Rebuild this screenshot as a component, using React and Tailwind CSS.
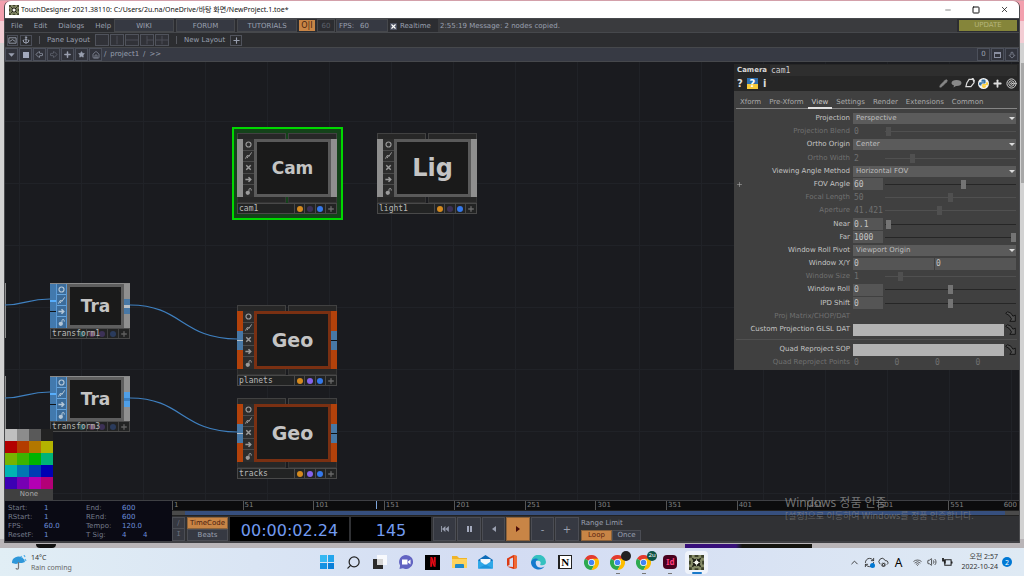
import React from "react";
import { SiNetflix } from "react-icons/si";
import {
    Anchor,
    ArrowBigDown,
    ArrowBigLeft,
    ArrowBigRight,
    ChevronUp,
    CloudCog,
    House,
    Minus,
    Pencil,
    Plus,
    RefreshCw,
    Search,
    Square,
    Star,
    Target,
    Volume2,
    Wifi,
    X
} from "lucide-react";

const PALETTE = [
    "bg-[#bfbfbf]", "bg-[#8c8c8c]", "bg-[#595959]", "bg-[#222222]",
    "bg-[#b30000]", "bg-[#b33c00]", "bg-[#b37700]", "bg-[#b3b300]",
    "bg-[#77b300]", "bg-[#3cb300]", "bg-[#00b300]", "bg-[#00b377]",
    "bg-[#00b3b3]", "bg-[#0077b3]", "bg-[#003cb3]", "bg-[#0000b3]",
    "bg-[#3c00b3]", "bg-[#7700b3]", "bg-[#b300b3]", "bg-[#b30077]"
];

const PARAMETERS = [
    { label: "Projection", type: "menu", value: "Perspective" },
    { label: "Projection Blend", type: "slider", value: "0", position: 1, disabled: true },
    { label: "Ortho Origin", type: "menu", value: "Center" },
    { label: "Ortho Width", type: "slider", value: "2", position: 20, disabled: true },
    { label: "Viewing Angle Method", type: "menu", value: "Horizontal FOV" },
    { label: "FOV Angle", type: "slider", value: "60", position: 60, expand: true },
    { label: "Focal Length", type: "slider", value: "50", position: 50, disabled: true },
    { label: "Aperture", type: "slider", value: "41.421", position: 41, disabled: true },
    { label: "Near", type: "slider", value: "0.1", position: 1 },
    { label: "Far", type: "slider", value: "1000", position: 100 },
    { label: "Window Roll Pivot", type: "menu", value: "Viewport Origin" },
    { label: "Window X/Y", type: "pair", value: "0" },
    { label: "Window Size", type: "slider", value: "1", position: 10, disabled: true },
    { label: "Window Roll", type: "slider", value: "0", position: 50 },
    { label: "IPD Shift", type: "slider", value: "0", position: 50 },
    { label: "Proj Matrix/CHOP/DAT", type: "path", disabled: true },
    { label: "Custom Projection GLSL DAT", type: "path" }
];

const FLAGS = {
    viewer: <circle cx="5" cy="5" r="2.800" strokeWidth="1.300" />,
    bypass: <path d="M1.500 8.500 4 4.500 5.500 6 8.500 1.500M3.500 8 5 5" />,
    cook: <path d="M2.500 2.500l5 5M7.500 2.500l-5 5" strokeWidth="1.600" />,
    exportFlag: <path d="M1.500 5h6M5 2.500 7.500 5 5 7.500" strokeWidth="1.700" />,
    lock: (
        <g>
            <circle cx="4.200" cy="6.500" r="2.400" fill="currentColor" stroke="none" />
            <path d="M5.500 5V3a1.300 1.300 0 0 1 2.600 0v1" />
        </g>
    )
};

function FlagIcon({ name }) {
    return (
        <svg viewBox="0 0 10 10" className="size-[9px]" fill="none" stroke="currentColor" strokeWidth="1.1">
            {FLAGS[name]}
        </svg>
    );
}

function DropArrow({ className }) {
    return (
        <svg viewBox="0 0 16 16" className={className} fill="currentColor" stroke="#151515" strokeWidth="1.4">
            <path d="M1 3.500 3.500 1Q9.500 2 11.500 7.500L15 6v9H7l2.500-3.500Q7 5.500 1 3.500z" />
        </svg>
    );
}

function ChromeLogo() {
    return (
        <svg viewBox="0 0 24 24" className="size-[15px]">
            <path d="M12 12 1.6 6A12 12 0 0 1 22.4 6z" fill="#e33b2e" />
            <path d="M12 12 1.6 6A12 12 0 0 0 12 24l5-9z" fill="#2da94f" />
            <path d="M12 12l5 3-5 9A12 12 0 0 0 22.4 6H12z" fill="#fdbd00" />
            <circle cx="12" cy="12" r="5.6" fill="#fff" />
            <circle cx="12" cy="12" r="4.4" fill="#4285f4" />
        </svg>
    );
}

function TouchLogo({ className }) {
    return (
        <svg viewBox="0 0 16 16" className={className}>
            <rect width="16" height="16" fill="#858b66" />
            <path d="M0 0h3v3H0zM13 0h3v3h-3zM0 13h3v3H0zM13 13h3v3h-3zM6 0h4v2H6zM6 14h4v2H6zM0 6h2v4H0zM14 6h2v4h-2z" fill="#3c402a" />
            <path d="M3.500 3.500l9 9M12.500 3.500l-9 9" stroke="#23251a" strokeWidth="1.600" />
            <circle cx="8" cy="8" r="4" fill="#1b1c14" />
            <path d="M8 4.500v7M4.500 8h7" stroke="#c8ccb4" strokeWidth="1" />
            <circle cx="8" cy="8" r="2.200" fill="#f5f5ee" />
        </svg>
    );
}

function PythonLogo() {
    return (
        <svg viewBox="0 0 16 16" className="size-[11px]">
            <circle cx="8" cy="8" r="8" fill="#f4f4f4" />
            <path d="M8 2c-2 0-3 .6-3 2v1.500h3.500V6H3.500C2 6 1.500 7 1.500 8.500S2.200 11 3.500 11H5V9.500C5 8.400 5.800 8 7 8h2.500c1 0 1.500-.6 1.500-1.500V4c0-1.400-1-2-3-2z" fill="#3572a5" />
            <path d="M8.500 14.500c2 0 3-.6 3-2V11H8v-.5h5c1.200 0 1.700-1 1.700-2.300S14 5.700 12.800 5.700H12V7c0 1.200-.8 1.800-2 1.800H7.500c-1 0-1.500.6-1.500 1.500v2.200c0 1.400 1 2 2.500 2z" fill="#ffd140" />
        </svg>
    );
}

/**
 * Operator tile that carries child networks: flaps on top and bottom, flags on the left
 */
function ComponentNode({ title, name, className, side, frame, titleSize, dot, connected }) {
    return (
        <div className={`absolute flex w-[100px] flex-col ${className}`}>
            <div className="grid h-[6px] grid-cols-2 gap-[2px]">
                <span className="border border-b-0 border-[#414141] bg-[#272727]"></span>
                <span className="border border-b-0 border-[#414141] bg-[#272727]"></span>
            </div>
            <div className="flex h-[58px]">
                <div className={`flex w-[6px] flex-col justify-center ${side}`}>
                    {connected && <span className="h-[19px] border-y-[9px] border-[#4878a5] bg-[#b9c0c6]"></span>}
                </div>
                <div className="grid w-[11px] grid-rows-5 divide-y divide-[#4a4a4a] bg-[#2c2c2c] text-[#9a9a9a]">
                    {["viewer", "bypass", "cook", "exportFlag", "lock"].map((flag) => (
                        <button key={flag} aria-label={flag} className="flex items-center justify-center">
                            <FlagIcon name={flag} />
                        </button>
                    ))}
                </div>
                <div className={`flex flex-1 items-center justify-center border-[3px] bg-[#1a1a1a] font-bold text-[#c4c4c4] ${frame} ${titleSize}`}>
                    {title}
                </div>
                <div className={`flex w-[6px] flex-col justify-center ${side}`}>
                    {connected && <span className="h-[19px] border-y-[9px] border-[#4878a5] bg-[#0e1114]"></span>}
                </div>
            </div>
            <div className="grid h-[6px] grid-cols-2 gap-[2px]">
                <span className="border border-t-0 border-[#353535] bg-[#272727]"></span>
                <span className="border border-t-0 border-[#353535] bg-[#272727]"></span>
            </div>
            <div className="flex h-[11px] border border-[#494949] bg-[#222323]">
                <span className="flex-1 pl-px font-['DejaVu_Sans_Mono',monospace] text-[8px] leading-[9px] text-[#b8b8b8]">{name}</span>
                <div className="grid w-[42px] grid-cols-4 divide-x divide-[#494949] border-l border-[#494949]">
                    <i className="flex items-center justify-center"><b className="size-[6px] rounded-full bg-[#d58a1e]"></b></i>
                    <i className="flex items-center justify-center"><b className={`size-[6px] rounded-full ${dot}`}></b></i>
                    <i className="flex items-center justify-center"><b className="size-[6px] rounded-full bg-[#3478ea]"></b></i>
                    <i className="flex items-center justify-center text-[#686868]"><Plus size={8} strokeWidth={4} /></i>
                </div>
            </div>
        </div>
    );
}

function TransformNode({ name, className, output }) {
    return (
        <div className={`absolute flex w-[80px] flex-col ${className}`}>
            <div className="flex h-[45px] border-t border-[#8a8a8a]">
                <div className="flex w-[6px] flex-col justify-center gap-[9px] bg-[#4279ad]">
                    <span className="h-[2px] bg-[#57aefc]"></span>
                    <span className="h-px bg-[#101418]"></span>
                </div>
                <div className="grid w-[11px] grid-rows-4 divide-y divide-[#66a5dd] border-x border-[#5a9ad6] bg-[#3c6c9a] text-[#b4c6d6]">
                    {["viewer", "bypass", "exportFlag", "lock"].map((flag) => (
                        <button key={flag} aria-label={flag} className="flex items-center justify-center">
                            <FlagIcon name={flag} />
                        </button>
                    ))}
                </div>
                <div className="flex flex-1 items-center justify-center border-[3px] border-[#5e5e5e] bg-[#1a1a1a] text-[17px] leading-5 font-bold text-[#c4c4c4]">
                    Tra
                </div>
                <div className="flex w-[6px] flex-col justify-center bg-[#8f8f8f]">
                    <span className={`h-[15px] border-y-[6px] ${output}`}></span>
                </div>
            </div>
            <div className="grid h-[11px] grid-cols-[26px_1fr] border border-[#494949] bg-[#222323]">
                <span className="z-10 pl-px font-['DejaVu_Sans_Mono',monospace] text-[8px] leading-[9px] text-[#b8b8b8]">{name}</span>
                <div className="grid grid-cols-5 divide-x divide-[#404040]">
                    <i className="flex items-center justify-center"><b className="size-[6px] rounded-full bg-[#28565a]"></b></i>
                    <i className="flex items-center justify-center"><b className="size-[6px] rounded-full bg-[#5b3355]"></b></i>
                    <i className="flex items-center justify-center"><b className="size-[6px] rounded-full bg-[#3c3156]"></b></i>
                    <i className="flex items-center justify-center"><b className="size-[6px] rounded-full bg-[#2a3b5c]"></b></i>
                    <i className="flex items-center justify-center text-[#606060]"><Plus size={8} strokeWidth={4} /></i>
                </div>
            </div>
        </div>
    );
}

class App extends React.Component {
    getTitleBar() {
        let titleBar = (
            <header className="flex h-[17px] shrink-0 items-center rounded-t-md bg-white pr-[10px] pl-1 font-['Noto_Sans','Noto_Sans_CJK_KR',sans-serif] text-[#111]">
                <TouchLogo className="mr-[2px] size-[10px]" />
                <h1 className="flex-1 truncate">TouchDesigner 2021.38110: C:/Users/2u.na/OneDrive/바탕 화면/NewProject.1.toe*</h1>
                <div className="flex items-center gap-5">
                    <button aria-label="Minimize" className="text-[#888]"><Minus size={8} strokeWidth={3} /></button>
                    <button aria-label="Maximize"><Square size={8} strokeWidth={3} /></button>
                    <button aria-label="Close"><X size={9} strokeWidth={2} /></button>
                </div>
            </header>
        );

        return titleBar;
    }

    getMenuBar() {
        let menuBar = (
            <nav className="flex h-[15px] shrink-0 items-stretch border-y border-[#46484c] bg-[#2c2d31]">
                <div className="flex w-[109px] items-center gap-[11px] pt-px pl-[6px]">
                    <button>File</button>
                    <button>Edit</button>
                    <button>Dialogs</button>
                    <button>Help</button>
                </div>
                <div className="flex gap-[2px]">
                    <a href="#wiki" className="flex w-[60px] items-center justify-center border border-[#46484c] bg-[#363942] pt-px">WIKI</a>
                    <a href="#forum" className="flex w-[59px] items-center justify-center border border-[#46484c] bg-[#363942] pt-px">FORUM</a>
                    <a href="#tutorials" className="flex w-[60px] items-center justify-center border border-[#46484c] bg-[#363942] pt-px">TUTORIALS</a>
                </div>
                <button className="mx-[2px] my-px w-[16px] bg-[#c88546] text-[8px] text-[#4a2510]">O|I</button>
                <span className="flex w-[18px] items-center justify-center border border-[#46484c] pt-px text-[#5e626c]">60</span>
                <span className="ml-px flex w-[52px] items-center gap-[6px] border border-[#46484c] bg-[#363942] pt-px pl-[2px]"><span>FPS:</span><span>60</span></span>
                <label className="flex w-[50px] items-center gap-[3px] pt-px pl-[2px]">
                    <span className="grid size-[7px] place-items-center bg-[#4b5060] text-white">
                        <input type="checkbox" defaultChecked className="peer col-start-1 row-start-1 size-[7px] appearance-none" />
                        <X size={7} strokeWidth={4} className="pointer-events-none col-start-1 row-start-1" />
                    </span>
                    Realtime
                </label>
                <span className="flex flex-1 items-center bg-[#3a3b3e] pt-px pl-[2px]">2:55:19 Message: 2 nodes copied.</span>
                <button className="mx-[2px] my-px w-[58px] bg-[#85853a] text-[#b5b57c]">UPDATE</button>
            </nav>
        );

        return menuBar;
    }

    getPaneBar() {
        let paneBar = (
            <div className="flex h-[14px] shrink-0 items-center bg-[#2c2d30]">
                <button aria-label="Bookmark" className="ml-[2px] flex h-[11px] w-[11px] items-center justify-center border border-[#4b4e58]">
                    <svg viewBox="0 0 10 10" className="size-[9px]" fill="none" stroke="currentColor"><path d="M1 2h8v6H1zM2 6l3-2 3 2" /></svg>
                </button>
                <button aria-label="Anchor" className="ml-[2px] flex h-[11px] w-[12px] items-center justify-center border border-[#4b4e58]"><Anchor size={8} strokeWidth={3} /></button>
                <span className="mx-[7px] h-[8px] w-px bg-[#55575e]"></span>
                <span className="w-[48px]">Pane Layout</span>
                <div className="flex gap-px text-[#50535c]">
                    {["", "M7 0v10", "M0 5h14", "M7 0v10M7 5h7", "M7 0v10M0 5h14"].map((shape) => (
                        <button key={shape} aria-label="Layout" className="h-[12px] w-[14px] border border-[#50535c] bg-[#313238]">
                            <svg viewBox="0 0 14 10" className="h-full w-full" fill="none" stroke="currentColor"><path d={shape} /></svg>
                        </button>
                    ))}
                </div>
                <span className="mx-[7px] h-[8px] w-px bg-[#55575e]"></span>
                <span className="w-[46px]">New Layout</span>
                <button aria-label="Add layout" className="flex h-[11px] w-[12px] items-center justify-center border border-[#50535c]"><Plus size={9} strokeWidth={3} /></button>
            </div>
        );

        return paneBar;
    }

    getPathBar() {
        let buttons = [
            ["Pane type", <svg viewBox="0 0 10 10" className="size-[9px]" fill="currentColor"><path d="M1.500 3.500h7L5 7.500z" /></svg>],
            ["Stop", <span className="size-[6px] bg-[#a4aabd]"></span>],
            ["Back", <ArrowBigLeft size={9} />],
            ["Forward", <ArrowBigRight size={9} className="opacity-50" />],
            ["Add operator", <Plus size={9} strokeWidth={4} />],
            ["Favorites", <Star size={7} fill="currentColor" />],
            ["Home", <House size={8} />]
        ];

        let pathBar = (
            <div className="flex h-[15px] shrink-0 items-center border-y border-[#46484c] bg-[#373a44]">
                {buttons.map(([label, icon]) => (
                    <button key={label} aria-label={label} className="mr-px flex h-[13px] w-[13px] items-center justify-center border border-[#4c505b] bg-[#31333b]">{icon}</button>
                ))}
                <div className="flex flex-1 gap-1 pl-px">
                    <span>/</span>
                    <a href="#project1">project1</a>
                    <span>/</span>
                    <span>&gt;&gt;</span>
                </div>
                <div className="flex gap-px pr-px">
                    <button className="h-[13px] w-[13px] border border-[#4c505b] bg-[#31333b]">0</button>
                    <button aria-label="Maximize pane" className="flex h-[13px] w-[13px] items-center justify-center border border-[#4c505b] bg-[#31333b]"><span className="h-[6px] w-[7px] border border-t-2 border-[#8a8fa0]"></span></button>
                    <button aria-label="Collapse pane" className="flex h-[13px] w-[13px] items-center justify-center border border-[#4c505b] bg-[#31333b]"><ArrowBigDown size={8} /></button>
                </div>
            </div>
        );

        return pathBar;
    }

    getParameterControl(parameter) {
        let text = parameter.disabled ? "text-[#707070]" : "text-[#c4c4c4]";

        if (parameter.type === "menu") {
            return (
                <div className="grid h-[11px] flex-1 items-center bg-[#5b5b5b] text-[#bfbfbf]">
                    <select id={parameter.label} className="col-start-1 row-start-1 h-[11px] appearance-none pl-[3px] leading-[11px]">
                        <option>{parameter.value}</option>
                    </select>
                    <svg viewBox="0 0 6 3" className="pointer-events-none col-start-1 row-start-1 mr-px h-[3px] w-[6px] justify-self-end" fill="#ddd"><path d="M0 0h6L3 3z" /></svg>
                </div>
            );
        }

        if (parameter.type === "pair") {
            return (
                <div className={`grid flex-1 grid-cols-2 gap-px font-['DejaVu_Sans_Mono',monospace] text-[8px] ${text}`}>
                    <input id={parameter.label} defaultValue="0" className="h-[12px] w-full min-w-0 bg-[#555] pl-px" />
                    <input aria-label="Window Y" defaultValue="0" className="h-[12px] w-full min-w-0 bg-[#555] pl-px" />
                </div>
            );
        }

        if (parameter.type === "path") {
            return (
                <div className="flex flex-1 items-center">
                    <input
                        id={parameter.label}
                        disabled={parameter.disabled}
                        className="h-[12px] w-full min-w-0 flex-1 bg-[#b3b3b3] text-[#222] disabled:bg-transparent"
                    />
                    <DropArrow className="ml-px size-[11px] text-[#505050]" />
                </div>
            );
        }

        return (
            <div className="flex flex-1 items-center gap-[2px]">
                <input
                    id={parameter.label}
                    defaultValue={parameter.value}
                    disabled={parameter.disabled}
                    className={`h-[12px] w-[30px] bg-[#555] pl-px font-['DejaVu_Sans_Mono',monospace] text-[8px] disabled:bg-transparent ${text}`}
                />
                <input
                    type="range"
                    aria-label={parameter.label + " slider"}
                    defaultValue={parameter.position}
                    disabled={parameter.disabled}
                    className="h-[9px] min-w-0 flex-1 appearance-none bg-[linear-gradient(#262626,#262626)] bg-[length:100%_1px] bg-center bg-no-repeat disabled:bg-[linear-gradient(#505050,#505050)] [&::-webkit-slider-thumb]:h-[9px] [&::-webkit-slider-thumb]:w-[5px] [&::-webkit-slider-thumb]:appearance-none [&::-webkit-slider-thumb]:bg-[#747474] disabled:[&::-webkit-slider-thumb]:bg-[#505050]"
                />
            </div>
        );
    }

    getParameterRow(parameter) {
        return (
            <div key={parameter.label} className="flex h-[13px] items-center gap-[3px]">
                <span className="w-[10px] pl-[2px] text-[#aaa]">{parameter.expand && <Plus size={7} />}</span>
                <label htmlFor={parameter.label} className={parameter.disabled ? "w-[103px] text-right text-[#707070]" : "w-[103px] text-right text-[#c4c4c4]"}>
                    {parameter.label}
                </label>
                {this.getParameterControl(parameter)}
            </div>
        );
    }

    getParameterPanel() {
        let panel = (
            <aside className="absolute top-[2px] right-0 w-[285px] bg-[#404040] pb-px whitespace-nowrap text-[#aaa]">
                <div className="bg-[#262626] pt-px pr-[2px] pl-[3px] pb-px">
                    <div className="flex h-[11px] items-center">
                        <b className="w-[33px] text-[#d8d8d8]">Camera</b>
                        <input aria-label="Operator name" defaultValue="cam1" className="h-[11px] min-w-0 flex-1 bg-[#2e2e2e] pl-px font-['DejaVu_Sans_Mono',monospace] text-[8px] text-[#ccc]" />
                    </div>
                    <div className="flex h-[14px] items-center text-[#ddd]">
                        <button className="w-[10px] text-left text-[10px] font-bold">?</button>
                        <button className="h-[11px] w-[11px] bg-[linear-gradient(#2f6fae_50%,#f5c93a_50%)] text-[10px] leading-[11px] font-bold text-white">?</button>
                        <button className="ml-[5px] text-[10px] font-bold">i</button>
                        <div className="ml-auto flex items-center gap-[3px]">
                            <Pencil size={9} fill="currentColor" className="text-[#888]" />
                            <svg viewBox="0 0 11 9" className="h-[9px] w-[11px]" fill="#888"><path d="M5.500 1C8.500 1 10.500 2.300 10.500 4S8.500 7 5.500 7H5L2.500 8.500 3 6.600C1.500 6 .5 5.100.5 4 .5 2.300 2.500 1 5.500 1z" /></svg>
                            <svg viewBox="0 0 11 11" className="size-[10px]" fill="none" stroke="currentColor" strokeWidth="1.300"><path d="M4.500 1.500 9 1.500 10 5 6.500 9.500 1 9.500 2 5.500z" /><path d="M8 0l2.500 4" strokeWidth="2" /></svg>
                            <PythonLogo />
                            <Plus size={11} strokeWidth={4} />
                            <Target size={11} />
                        </div>
                    </div>
                </div>
                <div className="mx-[2px] mt-[6px] flex h-[12px] gap-2 border-b border-[#858585] pl-1">
                    <button>Xform</button>
                    <button>Pre-Xform</button>
                    <button className="-mx-1 -mb-px border-b-2 border-[#e2e2e2] px-1 text-[#ccc]">View</button>
                    <button>Settings</button>
                    <button>Render</button>
                    <button>Extensions</button>
                    <button>Common</button>
                </div>
                <div className="mt-[3px] flex h-[224px] flex-col justify-between pr-[3px]">
                    {PARAMETERS.map((parameter) => this.getParameterRow(parameter))}
                </div>
                <hr className="mx-[2px] my-[3px] border-[#505050]" />
                <div className="pr-[3px]">
                    {this.getParameterRow({ label: "Quad Reproject SOP", type: "path" })}
                    <div className="flex h-[13px] items-center gap-[3px] text-[#707070]">
                        <span className="w-[116px] text-right">Quad Reproject Points</span>
                        <div className="grid flex-1 grid-cols-4 pl-px font-['DejaVu_Sans_Mono',monospace] text-[8px]">
                            <span>0</span>
                            <span>0</span>
                            <span>0</span>
                            <span>0</span>
                        </div>
                    </div>
                </div>
            </aside>
        );

        return panel;
    }

    getNetwork() {
        let network = (
            <main className="relative flex-1 overflow-hidden bg-[#1a1b1f] bg-[linear-gradient(to_right,#202227_1px,transparent_1px),linear-gradient(to_bottom,#202227_1px,transparent_1px)] bg-[length:62px_62px] bg-[position:14px_59px]">
                <div className="absolute top-[221px] left-0 h-[55px] w-px bg-[#8f8f8f]"></div>
                <div className="absolute top-[314px] left-0 h-[55px] w-px bg-[#8f8f8f]"></div>

                <div className="absolute top-[65px] left-[227px] h-[93px] w-[111px] border-2 border-[#00d800] bg-[#14431a]"></div>
                <ComponentNode title="Cam" name="cam1" className="top-[71px] left-[232px]" side="bg-[#8f8f8f]" frame="border-[#5a5a5a]" titleSize="text-[17px]" dot="bg-[#3c3156]" />
                <ComponentNode title="Lig" name="light1" className="top-[71px] left-[372px]" side="bg-[#8f8f8f]" frame="border-[#5a5a5a]" titleSize="text-2xl" dot="bg-[#3c3156]" />
                <ComponentNode title="Geo" name="planets" className="top-[243px] left-[232px]" side="bg-[#b3420b]" frame="border-[#7a3012]" titleSize="text-[19px]" dot="bg-[#8463ea]" connected />
                <ComponentNode title="Geo" name="tracks" className="top-[336px] left-[232px]" side="bg-[#b3420b]" frame="border-[#7a3012]" titleSize="text-[19px]" dot="bg-[#8463ea]" connected />
                <TransformNode name="transform1" className="top-[221px] left-[45px]" output="border-[#4878a5] bg-[#b9c0c6]" />
                <TransformNode name="transform3" className="top-[314px] left-[45px]" output="border-[#4f9fe8] bg-[#3b7fc0]" />

                <svg className="pointer-events-none absolute top-0 left-0 h-full w-full" fill="none" stroke="#3f80c0" strokeWidth="1.2">
                    <path d="M0 243c20 0 22-6 45-6" />
                    <path d="M0 336c20 0 22-6 45-6" />
                    <path d="M125 243c52 0 52 34 107 34" />
                    <path d="M125 336c52 0 52 34 107 34" />
                </svg>

                <div className="absolute bottom-0 left-0 w-[48px] bg-[#404040] text-center text-[#aaa]">
                    <div className="grid grid-cols-4">
                        {PALETTE.map((color) => <button key={color} aria-label="Node color" className={`h-[12px] ${color}`}></button>)}
                    </div>
                    <button className="block h-[11px] w-full leading-[11px]">None</button>
                </div>

                {this.getParameterPanel()}
            </main>
        );

        return network;
    }

    getTimeline() {
        let frames = [1, 51, 101, 151, 201, 251, 301, 351, 401, 451, 501, 551];

        let timeline = (
            <footer className="flex h-[43px] shrink-0 border-t border-b-2 border-[#3f4044] bg-[#303134]">
                <dl className="grid w-[167px] shrink-0 grid-cols-[36px_42px_36px_21px_1fr] grid-rows-4 items-center bg-[#0a0a14] pt-[3px] pb-px pl-[3px] text-[#747a8a] [&>dd]:text-[#6c8fdc]">
                    <dt>Start:</dt><dd>1</dd><dt>End:</dt><dd className="col-span-2">600</dd>
                    <dt>RStart:</dt><dd>1</dd><dt>REnd:</dt><dd className="col-span-2">600</dd>
                    <dt>FPS:</dt><dd>60.0</dd><dt>Tempo:</dt><dd className="col-span-2">120.0</dd>
                    <dt>ResetF:</dt><dd>1</dd><dt>T Sig:</dt><dd>4</dd><dd>4</dd>
                </dl>
                <div className="flex min-w-0 flex-1 flex-col">
                    <div className="relative flex h-[9px] bg-[#0c0c0d] leading-[9px] text-[#808080]">
                        {frames.map((frame) => <span key={frame} className="flex-1 border-l border-[#555] pl-px">{frame}</span>)}
                        <span className="absolute right-[2px]">600</span>
                        <span className="absolute top-0 h-[8px] w-px bg-[#7fa7dd]" style={{ left: (144 / 599) * 100 + "%" }}></span>
                    </div>
                    <div className="flex h-[6px] justify-between border-y border-[#222] bg-[#364f7e]">
                        <span className="w-[13px] bg-[#4a4a4a]"></span>
                        <span className="w-[14px] bg-[#4a4a4a]"></span>
                    </div>
                    <div className="flex flex-1 gap-[2px] pt-px">
                        <div className="grid w-[13px] grid-rows-2 text-[#6b7080]">
                            <button className="border border-[#4b4d54] bg-[#363840]">/</button>
                            <button className="border border-t-0 border-[#4b4d54] bg-[#363840] font-['DejaVu_Sans_Mono',monospace]">I</button>
                        </div>
                        <div className="grid w-[41px] grid-rows-2">
                            <button className="border border-[#8c623a] bg-[#c88546] text-[#4a1c10]">TimeCode</button>
                            <button className="border border-[#4b4d54] bg-[#363942]">Beats</button>
                        </div>
                        <output className="flex w-[119px] items-center justify-center bg-black pt-1 text-base leading-4 text-[#729bf0]">00:00:02.24</output>
                        <output className="flex w-[80px] items-center justify-center bg-black pt-1 text-base leading-4 text-[#729bf0]">145</output>
                        <div className="flex gap-px">
                            <button aria-label="Rewind" className="flex w-[23px] items-center justify-center border border-[#4b4d54] bg-[#363942]">
                                <svg viewBox="0 0 9 7" className="h-[6px] w-[8px]" fill="currentColor"><path d="M0 0h1v7H0zM5 0v7L1 3.500zM9 0v7L5 3.500z" /></svg>
                            </button>
                            <button aria-label="Pause" className="flex w-[24px] items-center justify-center gap-px border border-[#4b4d54] bg-[#363942]">
                                <i className="h-[6px] w-[2px] bg-[#a4aabd]"></i>
                                <i className="h-[6px] w-[2px] bg-[#a4aabd]"></i>
                            </button>
                            <button aria-label="Reverse" className="flex w-[23px] items-center justify-center border border-[#4b4d54] bg-[#363942]">
                                <svg viewBox="0 0 4 6" className="h-[6px] w-[4px]" fill="currentColor"><path d="M4 0v6L0 3z" /></svg>
                            </button>
                            <button aria-label="Play" className="flex w-[24px] items-center justify-center border border-[#8c623a] bg-[#c88546] text-[#4a0c08]">
                                <svg viewBox="0 0 4 6" className="h-[6px] w-[4px]" fill="currentColor"><path d="M0 0v6L4 3z" /></svg>
                            </button>
                            <button className="w-[23px] border border-[#4b4d54] bg-[#363942] text-[10px]">-</button>
                            <button className="w-[24px] border border-[#4b4d54] bg-[#363942] text-[10px]">+</button>
                        </div>
                        <div className="flex flex-col justify-between">
                            <span className="leading-[12px]">Range Limit</span>
                            <div className="flex">
                                <button className="h-[11px] w-[31px] border border-[#8c623a] bg-[#c88546] text-[#5a2410]">Loop</button>
                                <button className="h-[11px] w-[29px] border border-[#4b4d54] bg-[#363942]">Once</button>
                            </div>
                        </div>
                    </div>
                </div>
            </footer>
        );

        return timeline;
    }

    getTaskbarIcons() {
        let cell = "relative flex items-center justify-center";

        let icons = (
            <div className="absolute inset-y-0 left-1/2 grid w-[396px] -translate-x-1/2 grid-cols-15">
                <button aria-label="Start" className={cell}>
                    <span className="grid size-[14px] grid-cols-2 gap-px">
                        <i className="bg-[#35b8f2]"></i><i className="bg-[#22a5ec]"></i><i className="bg-[#1692e2]"></i><i className="bg-[#0a7fd8]"></i>
                    </span>
                </button>
                <button aria-label="Search" className={cell}><Search size={15} className="-scale-x-100 text-[#222]" /></button>
                <button aria-label="Task view" className={cell}>
                    <svg viewBox="0 0 14 14" className="size-[14px]"><path d="M0 4h10v10H0z" fill="#2b2b2b" /><path d="M4 0h10v10H4z" fill="#fff" opacity=".8" /></svg>
                </button>
                <button aria-label="Chat" className={cell}>
                    <svg viewBox="0 0 14 14" className="size-[14px]">
                        <path d="M7 0a7 7 0 1 1-3 13.300L.5 14l.6-3.400A7 7 0 0 1 7 0z" fill="#6264c2" />
                        <path d="M3 4.500h5.500v5H3zM9 6.500l2.500-2v5L9 7.500z" fill="#fff" />
                    </svg>
                </button>
                <button aria-label="Netflix" className={cell}><span className="grid size-[15px] place-items-center bg-black text-[#e50914]"><SiNetflix size={10} /></span></button>
                <button aria-label="Explorer" className={cell}>
                    <svg viewBox="0 0 15 14" className="h-[14px] w-[15px]"><path d="M0 1h5l2 2h8v10H0z" fill="#f0b429" /><path d="M0 4h15v9H0z" fill="#fdd35d" /><path d="M3 13v-3q0-1 1-1h7q1 0 1 1v3z" fill="#1e88c9" /></svg>
                </button>
                <button aria-label="Mail" className={cell}>
                    <svg viewBox="0 0 15 14" className="h-[14px] w-[15px]"><path d="M0 5l7.500-5L15 5v8H0z" fill="#0f6cb8" /><path d="M2.500 4h10v4l-5 3-5-3z" fill="#f2f8fc" /><path d="M0 5l7.500 5L15 5v8.500H0z" fill="#2fa8e8" /><path d="M0 13.500 7.500 9.500l7.500 4z" fill="#1c94dc" /></svg>
                </button>
                <button aria-label="Office" className={cell}>
                    <svg viewBox="0 0 12 14" className="h-[14px] w-[12px]"><path d="M1 3.500 7.500 0 11 1v12l-3.500 1L1 11.500l6 .5V2.500L3.500 4v6L1 11z" fill="#dc3a12" /><path d="M8 0l3 1v12l-3 1z" fill="#ef6a35" /></svg>
                </button>
                <button aria-label="Edge" className={cell}>
                    <svg viewBox="0 0 16 16" className="size-[15px]"><path d="M0 8a8 8 0 0 1 16-.5C16 10 14 11 12 11s-2.500-.8-2-1.500c1-2-.5-3.500-2.500-3.500C4 6 2 9 3 12a8 8 0 0 1-3-4z" fill="#35c1c0" /><path d="M0 8c.5-4 5-5 8-3.500C4 5 4 11 8 13c2.500 1 5 .5 6.500-1A8 8 0 0 1 0 8z" fill="#1479cd" /></svg>
                </button>
                <button aria-label="Notion" className={cell}><span className="grid size-[14px] place-items-center border border-l-2 border-[#222] bg-white font-['Liberation_Serif',serif] text-[11px] leading-none font-bold text-black">N</span></button>
                <button aria-label="Chrome" className={cell}><ChromeLogo /></button>
                <button aria-label="Chrome profile" className={cell}>
                    <ChromeLogo />
                    <span className="absolute top-[3px] right-0 size-[10px] rounded-full bg-[#222]"></span>
                    <span className="absolute bottom-[2px] h-px w-[4px] bg-[#777]"></span>
                </button>
                <button aria-label="Chrome work profile" className={cell}>
                    <ChromeLogo />
                    <span className="absolute top-[3px] right-0 size-[10px] rounded-full bg-[#0c5347] text-[6px] leading-[9px] text-white">2u</span>
                    <span className="absolute bottom-[2px] h-px w-[4px] bg-[#777]"></span>
                </button>
                <button aria-label="InDesign" className={cell}>
                    <span className="size-[14px] rounded-sm bg-[#49021f] text-center text-[8px] leading-[13px] font-bold text-[#ff3b7d]">Id</span>
                    <span className="absolute bottom-[2px] h-px w-[4px] bg-[#777]"></span>
                </button>
                <button aria-label="TouchDesigner" className={cell}>
                    <span className="grid size-[23px] place-items-center rounded-sm bg-white/60"><TouchLogo className="size-[15px]" /></span>
                    <span className="absolute bottom-[2px] h-[2px] w-[10px] rounded-full bg-[#1979ca]"></span>
                </button>
            </div>
        );

        return icons;
    }

    getTaskbar() {
        let taskbar = (
            <div className="relative flex h-[28px] shrink-0 items-center justify-between bg-linear-to-r from-[#e1eef5] via-[#d3dcf3] to-[#dfeaf4] pr-[12px] pl-[12px] font-['Noto_Sans','Noto_Sans_CJK_KR',sans-serif] text-[#333]">
                <div className="flex items-center gap-1">
                    <svg viewBox="0 0 15 15" className="size-[15px]">
                        <path d="M0 8a6.500 6 0 0 1 13-1l-3 1-3 0-3 1z" fill="#2f97d9" />
                        <path d="M6.500 7v6a1.200 1.200 0 0 1-2.400 0" fill="none" stroke="#777" strokeWidth="1.200" />
                        <path d="M9 1l1 2M12 0l1 2M13 4l1 2" stroke="#58b4ea" strokeWidth="1.300" />
                    </svg>
                    <p className="pt-px leading-[10px]">14°C<br /><span className="text-[#666]">Rain coming</span></p>
                </div>
                {this.getTaskbarIcons()}
                <div className="flex items-center">
                    <ChevronUp size={11} className="mr-1" />
                    <span className="relative mr-[3px]">
                        <RefreshCw size={11} />
                        <i className="absolute right-0 bottom-0 size-[5px] rounded-full bg-[#0078d4]"></i>
                    </span>
                    <CloudCog size={11} className="mr-[6px]" />
                    <span className="mr-[11px] text-[12px] text-black">A</span>
                    <Wifi size={9} className="mr-[5px]" />
                    <Volume2 size={10} className="mr-[5px]" />
                    <svg viewBox="0 0 12 10" className="mr-[8px] h-[9px] w-[11px]" fill="none" stroke="#222" strokeWidth="1.200"><path d="M3 2h7v6H3zM11 4v2" /><path d="M1 0v3h2v3" strokeWidth="2" /></svg>
                    <p className="mr-[4px] text-right leading-[10px]">오전 2:57<br />2022-10-24</p>
                    <span className="grid size-[10px] place-items-center rounded-full bg-[#0078d4] leading-none text-white">2</span>
                </div>
            </div>
        );

        return taskbar;
    }

    render() {
        return (
            <div className="flex h-screen flex-col overflow-hidden font-['DejaVu_Sans',sans-serif] text-[7px] leading-[9px]">
                <div className="relative flex min-h-0 flex-1 flex-col border-t border-[#d3a0aa] bg-[linear-gradient(to_bottom,#f3a0ae_0_20px,#f3cdd4_20px_42px,#d2d2d2_42px_538px,#b9b5b8_538px)] px-1 pb-[5px]">
                    <div className="flex min-h-0 flex-1 flex-col rounded-t-md border-x border-[#4a4b4e] text-[#9aa0b0]">
                        {this.getTitleBar()}
                        {this.getMenuBar()}
                        {this.getPaneBar()}
                        {this.getPathBar()}
                        {this.getNetwork()}
                        {this.getTimeline()}
                    </div>
                    <div className="absolute top-[62px] right-0 h-[120px] w-[3px] bg-[#a8a8a8]"></div>
                    <div className="absolute bottom-0 left-[36px] h-1 w-[20px] rounded-b-full bg-[#111]"></div>
                    <div className="absolute bottom-0 left-[685px] h-1 w-[127px] bg-linear-to-r from-[#38107a] from-40% to-[#14140f] to-45%"></div>
                    <div className="pointer-events-none absolute bottom-[26px] left-[785px] font-['Noto_Sans','Noto_Sans_CJK_KR',sans-serif] whitespace-nowrap text-[#8c8c8c]/80">
                        <p className="text-[12px] leading-[15px]">Windows 정품 인증</p>
                        <p className="text-[9px] leading-[12px] opacity-70">[설정]으로 이동하여 Windows를 정품 인증합니다.</p>
                    </div>
                </div>
                {this.getTaskbar()}
            </div>
        );
    }
}

export default App;
